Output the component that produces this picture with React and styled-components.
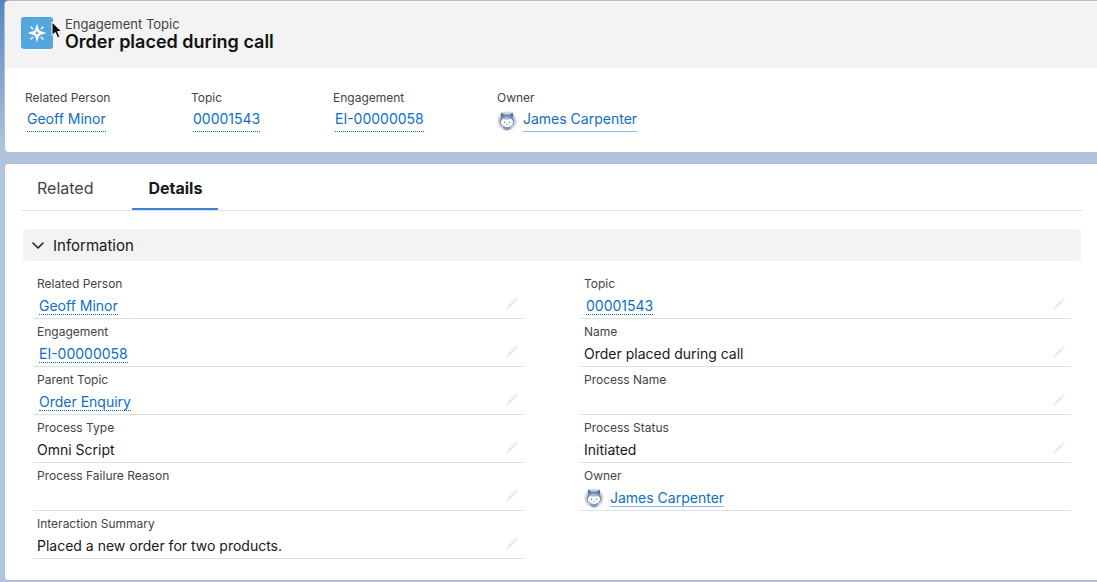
import { useState } from 'react'
import styled, { createGlobalStyle } from 'styled-components'

const highlights = [
  { label: 'Related Person', value: 'Geoff Minor', link: true },
  { label: 'Topic', value: '00001543', link: true },
  { label: 'Engagement', value: 'EI-00000058', link: true },
  { label: 'Owner', value: 'James Carpenter', link: true, avatar: true },
]

const leftFields = [
  { label: 'Related Person', value: 'Geoff Minor', link: true, editable: true },
  { label: 'Engagement', value: 'EI-00000058', link: true, editable: true },
  { label: 'Parent Topic', value: 'Order Enquiry', link: true, editable: true },
  { label: 'Process Type', value: 'Omni Script', editable: true },
  { label: 'Process Failure Reason', value: '', editable: true },
  {
    label: 'Interaction Summary',
    value: 'Placed a new order for two products.',
    editable: true,
  },
]

const rightFields = [
  { label: 'Topic', value: '00001543', link: true, editable: true },
  { label: 'Name', value: 'Order placed during call', editable: true },
  { label: 'Process Name', value: '', editable: true },
  { label: 'Process Status', value: 'Initiated', editable: true },
  { label: 'Owner', value: 'James Carpenter', link: true, avatar: true },
]

function TopicIcon() {
  return (
    <svg width="20" height="20" viewBox="0 0 20 20" aria-hidden="true">
      <path
        fill="#fff"
        fillRule="evenodd"
        d="M10 .5 11.9 6.8 13.2 8.1 19.5 10 13.2 11.9 11.9 13.2 10 19.5 8.1 13.2 6.8 11.9.5 10 6.8 8.1 8.1 6.8ZM10 8.6A1.4 1.4 0 1 0 10 11.4 1.4 1.4 0 1 0 10 8.6Z"
      />
      <path
        stroke="#fff"
        strokeWidth="1.4"
        strokeLinecap="round"
        d="m4 4 1.7 1.7M16 4l-1.7 1.7M4 16l1.7-1.7M16 16l-1.7-1.7"
      />
    </svg>
  )
}

function PencilIcon() {
  return (
    <svg width="14" height="14" viewBox="0 0 14 14" aria-hidden="true">
      <path
        fill="#ebebeb"
        d="M2.2 9.6 9 2.8l2 2-6.8 6.8ZM9.8 2l1-1c.3-.3.7-.3 1 0l1 1c.3.3.3.7 0 1l-1 1ZM1.6 10.4l1.9 1.9-2.6.7Z"
      />
    </svg>
  )
}

function AvatarIcon() {
  return (
    <svg width="20" height="20" viewBox="0 0 20 20" aria-hidden="true">
      <circle cx="10" cy="10" r="9.6" fill="#cfd6e5" />
      <path
        fill="#7b8db3"
        d="M4 2.4c0-.9.8-1.2 1.4-.7l2 1.9c1.7-.5 3.5-.5 5.2 0l2-1.9c.6-.5 1.4-.2 1.4.7v4.200c.9 1.200 1.300 2.600 1.300 4 0 3.400-3.100 5.700-7.300 5.700s-7.300-2.300-7.300-5.700c0-1.400.4-2.800 1.300-4Z"
      />
      <path fill="#4f6390" d="M4.200 2.200 6.800 4.400 4.400 6ZM15.800 2.200 13.200 4.400 15.600 6Z" />
      <path fill="#8799bf" d="M5.600 15.400h8.800c-.4 2.400-2.200 3.900-4.400 3.900s-4-1.500-4.400-3.900Z" />
      <ellipse cx="10" cy="11.300" rx="6.100" ry="4.700" fill="#fff" />
      <path fill="#a5b4d2" d="M5.400 8.300c1.600-2 7.600-2 9.200 0-2.200-.5-3.200.3-4.600.1-1.400.2-2.400-.6-4.600-.1Z" />
      <circle cx="7.600" cy="11.200" r=".7" fill="#6278a6" />
      <circle cx="12.400" cy="11.200" r=".7" fill="#6278a6" />
      <path
        d="M9 13.200c.6.400 1.400.4 2 0"
        fill="none"
        stroke="#6278a6"
        strokeWidth=".6"
        strokeLinecap="round"
      />
    </svg>
  )
}

function FieldValue({ field, roomy }) {
  if (!field.link) return field.value
  return (
    <>
      {field.avatar && (
        <Avatar>
          <AvatarIcon />
        </Avatar>
      )}
      <RecordLink href="#" $solid={field.avatar} $roomy={roomy}>
        {field.value}
      </RecordLink>
    </>
  )
}

function FieldColumn({ fields }) {
  return (
    <Column>
      {fields.map((field) => (
        <Field key={field.label}>
          <FieldLabel>{field.label}</FieldLabel>
          <FieldBody>
            <FieldValue field={field} />
            {field.editable && (
              <EditButton type="button" aria-label={'Edit ' + field.label}>
                <PencilIcon />
              </EditButton>
            )}
          </FieldBody>
        </Field>
      ))}
    </Column>
  )
}

export default function App() {
  const [tab, setTab] = useState('Details')
  const [open, setOpen] = useState(true)

  return (
    <Page>
      <GlobalStyle />
      <Card>
        <Header>
          <IconTile>
            <TopicIcon />
            <Pointer width="13" height="19" viewBox="0 0 13 19" aria-hidden="true">
              <path
                fill="#111"
                stroke="#fff"
                strokeWidth="1"
                d="M1 1v13.5l3.2-3 2.3 5.300 2.400-1-2.300-5.200h4.300Z"
              />
            </Pointer>
          </IconTile>
          <div>
            <Kind>Engagement Topic</Kind>
            <Title>Order placed during call</Title>
          </div>
        </Header>
        <Highlights>
          {highlights.map((field) => (
            <div key={field.label}>
              <FieldLabel>{field.label}</FieldLabel>
              <HighlightBody>
                <FieldValue field={field} roomy />
              </HighlightBody>
            </div>
          ))}
        </Highlights>
      </Card>

      <Card $padded>
        <Tabs role="tablist">
          {['Related', 'Details'].map((name) => (
            <Tab
              key={name}
              type="button"
              role="tab"
              aria-selected={tab === name}
              $active={tab === name}
              onClick={() => setTab(name)}
            >
              {name}
            </Tab>
          ))}
        </Tabs>
        {tab === 'Details' && (
          <Section>
            <SectionToggle
              type="button"
              aria-expanded={open}
              onClick={() => setOpen(!open)}
            >
              <Chevron width="14" height="14" viewBox="0 0 14 14" $open={open}>
                <path
                  d="m2 5 5 5 5-5"
                  fill="none"
                  stroke="#222"
                  strokeWidth="1.6"
                  strokeLinecap="round"
                  strokeLinejoin="round"
                />
              </Chevron>
              Information
            </SectionToggle>
            {open && (
              <Columns>
                <FieldColumn fields={leftFields} />
                <FieldColumn fields={rightFields} />
              </Columns>
            )}
          </Section>
        )}
      </Card>
    </Page>
  )
}

const GlobalStyle = createGlobalStyle`
  * {
    box-sizing: border-box;
  }
  body {
    margin: 0;
    background: #b0c4df;
    font-family: Inter, 'Liberation Sans', sans-serif;
    color: #181818;
  }
  button {
    font-family: inherit;
    border: 0;
    background: none;
    cursor: pointer;
  }
`

const Page = styled.main`
  display: flex;
  flex-direction: column;
  gap: 12px;
  min-height: 100vh;
  padding: 1px 0 2px 5px;
  background: linear-gradient(#5287c2, #b0c4df 150px);
`

const Card = styled.section`
  background: #fff;
  border-radius: 4px 0 0 4px;
  box-shadow: 0 0 0 1px #b5bccb;
  padding: ${(props) => (props.$padded ? '0 14px 21px 16px' : '0')};
`

const Header = styled.header`
  display: flex;
  gap: 12px;
  padding: 16px;
  background: #f3f3f3;
  border-radius: 4px 0 0 0;
`

const IconTile = styled.div`
  position: relative;
  display: flex;
  align-items: center;
  justify-content: center;
  width: 32px;
  height: 32px;
  border-radius: 3px;
  background: #54a7dd;
`

const Pointer = styled.svg`
  position: absolute;
  top: 4px;
  left: 30px;
`

const Kind = styled.div`
  font-size: 13px;
  line-height: 15px;
  color: #444;
`

const Title = styled.h1`
  margin: 0;
  font-size: 18px;
  line-height: 20px;
  font-weight: 600;
  color: #111;
`

const Highlights = styled.dl`
  display: grid;
  grid-template-columns: 166px 142px 164px auto;
  margin: 0;
  padding: 21px 20px 18px;
`

const FieldLabel = styled.dt`
  font-size: 12px;
  line-height: 18px;
  color: #444;
`

const HighlightBody = styled.dd`
  display: flex;
  align-items: center;
  height: 27px;
  margin: 0;
  font-size: 14px;
  line-height: 20px;
`

const RecordLink = styled.a`
  margin-left: 2px;
  padding-bottom: ${(props) => (props.$roomy ? '2px' : '0')};
  color: #0b6fc7;
  text-decoration: none;
  line-height: ${(props) => (props.$roomy ? '20px' : '17px')};
  border-bottom: 1px ${(props) => (props.$solid ? 'solid #8dbbe6' : 'dotted #0b6fc7')};
`

const Avatar = styled.span`
  display: flex;
  margin-right: 4px;
`

const Tabs = styled.div`
  display: flex;
  gap: 23px;
  border-bottom: 1px solid #e2e2e2;
`

const Tab = styled.button`
  height: 46px;
  padding: 4px 16px 0;
  font-size: 16px;
  line-height: 24px;
  font-weight: ${(props) => (props.$active ? 700 : 400)};
  color: ${(props) => (props.$active ? '#181818' : '#444')};
  border-bottom: 2px solid ${(props) => (props.$active ? '#3d84d8' : 'transparent')};
`

const Section = styled.div`
  margin: 18px 2px 0;
`

const SectionToggle = styled.button`
  display: flex;
  align-items: center;
  gap: 8px;
  width: 100%;
  height: 32px;
  padding: 0 8px;
  border-radius: 3px;
  background: #f3f3f3;
  font-size: 15px;
  color: #181818;
`

const Chevron = styled.svg`
  transform: ${(props) => (props.$open ? 'none' : 'rotate(-90deg)')};
`

const Columns = styled.div`
  display: grid;
  grid-template-columns: 1fr 1fr;
  gap: 56px;
  padding: 10px 10px 0;
`

const Column = styled.dl`
  margin: 0;
`

const Field = styled.div`
  height: 48px;
  padding: 4px 4px 0;
  border-bottom: 1px solid #e0e0e0;
`

const FieldBody = styled.dd`
  display: flex;
  align-items: center;
  height: 25px;
  margin: 0;
  font-size: 14px;
  line-height: 20px;
`

const EditButton = styled.button`
  display: flex;
  margin-left: auto;
  padding: 0 1px 3px;
`
